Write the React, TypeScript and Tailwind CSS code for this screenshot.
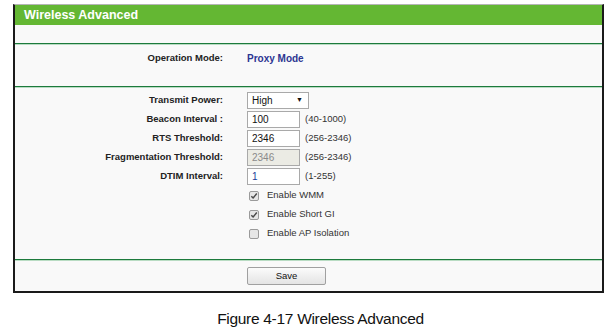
import React from "react";

const font = { fontFamily: '"Liberation Sans", Arial, sans-serif' };

function Check({ checked }: { checked: boolean }) {
  return (
    <span className="flex h-[10px] w-[10px] items-center justify-center rounded-[2px] border border-[#9a9a9a] bg-[#e6e6e6]">
      {checked && (
        <svg width="8" height="8" viewBox="0 0 8 8">
          <path d="M1.3 4.2 L3.1 6 L6.8 1.6" stroke="#4a4a4a" strokeWidth="1.5" fill="none" />
        </svg>
      )}
    </span>
  );
}

function Row({ label, children }: { label: string; children: React.ReactNode }) {
  return (
    <div className="flex h-[19px] items-center">
      <div className="w-[208px] text-right text-[9.5px] font-bold text-[#222]">{label}</div>
      <div className="ml-[24px] flex items-center">{children}</div>
    </div>
  );
}

function Input({ value, disabled, blue }: { value: string; disabled?: boolean; blue?: boolean }) {
  return (
    <div
      className={
        "flex h-[17px] w-[53px] items-center border border-[#a9a9a9] pl-[4px] text-[10px] " +
        (disabled ? "bg-[#ebebe4] text-[#8a8a8a]" : blue ? "bg-white text-[#1b3a9a]" : "bg-white text-[#111]")
      }
    >
      {value}
    </div>
  );
}

function Range({ text }: { text: string }) {
  return <span className="ml-[5px] text-[9.5px] text-[#333]">{text}</span>;
}

export default function App() {
  return (
    <div className="h-[334px] w-[611px] bg-white pt-[4px]" style={font}>
      <div className="ml-[13px] w-[591px] border-x-2 border-b-2 border-t border-x-[#1a1a1a] border-b-[#1a1a1a] border-t-[#b5b5b5] bg-[#f9f9f9]">
        <div className="flex h-[20px] items-center bg-[#64b733] pl-[9px] text-[12.5px] font-bold text-white">
          Wireless Advanced
        </div>
        <div className="h-[18px]" />
        <div className="h-[2px] border-t border-t-[#1d7a3c] bg-[#b9dcc3]" />
        <div className="h-[41px] pt-[6px]">
          <div className="flex items-center">
            <div className="w-[208px] text-right text-[9.5px] font-bold text-[#222]">Operation Mode:</div>
            <div className="ml-[24px] text-[10px] font-bold text-[#2c3592]">Proxy Mode</div>
          </div>
        </div>
        <div className="h-[2px] border-t border-t-[#1d7a3c] bg-[#b9dcc3]" />
        <div className="pb-[16px] pt-[3px]">
          <Row label="Transmit Power:">
            <div className="flex h-[17px] w-[62px] items-center justify-between border border-[#a9a9a9] bg-white pl-[4px] pr-[5px] text-[10px] text-[#111]">
              <span>High</span>
              <span className="text-[7px]">▼</span>
            </div>
          </Row>
          <Row label="Beacon Interval :">
            <Input value="100" />
            <Range text="(40-1000)" />
          </Row>
          <Row label="RTS Threshold:">
            <Input value="2346" />
            <Range text="(256-2346)" />
          </Row>
          <Row label="Fragmentation Threshold:">
            <Input value="2346" disabled />
            <Range text="(256-2346)" />
          </Row>
          <Row label="DTIM Interval:">
            <Input value="1" blue />
            <Range text="(1-255)" />
          </Row>
          {[
            ["Enable WMM", true],
            ["Enable Short GI", true],
            ["Enable AP Isolation", false],
          ].map(([t, c]) => (
            <div key={t as string} className="flex h-[19px] items-center pl-[234px]">
              <Check checked={c as boolean} />
              <span className="ml-[8px] text-[9.5px] text-[#333]">{t as string}</span>
            </div>
          ))}
        </div>
        <div className="h-[2px] border-t border-t-[#1d7a3c] bg-[#b9dcc3]" />
        <div className="flex h-[30px] items-center pl-[232px]">
          <button className="h-[18px] w-[79px] rounded-[2px] border border-[#a0a0a0] bg-gradient-to-b from-[#fbfbfb] to-[#e4e4e4] text-[9.5px] text-[#111]">
            Save
          </button>
        </div>
      </div>
      <div className="mt-[14px] pl-[30px] text-center text-[15.5px] tracking-[-0.3px] text-[#111]">Figure 4-17 Wireless Advanced</div>
    </div>
  );
}
